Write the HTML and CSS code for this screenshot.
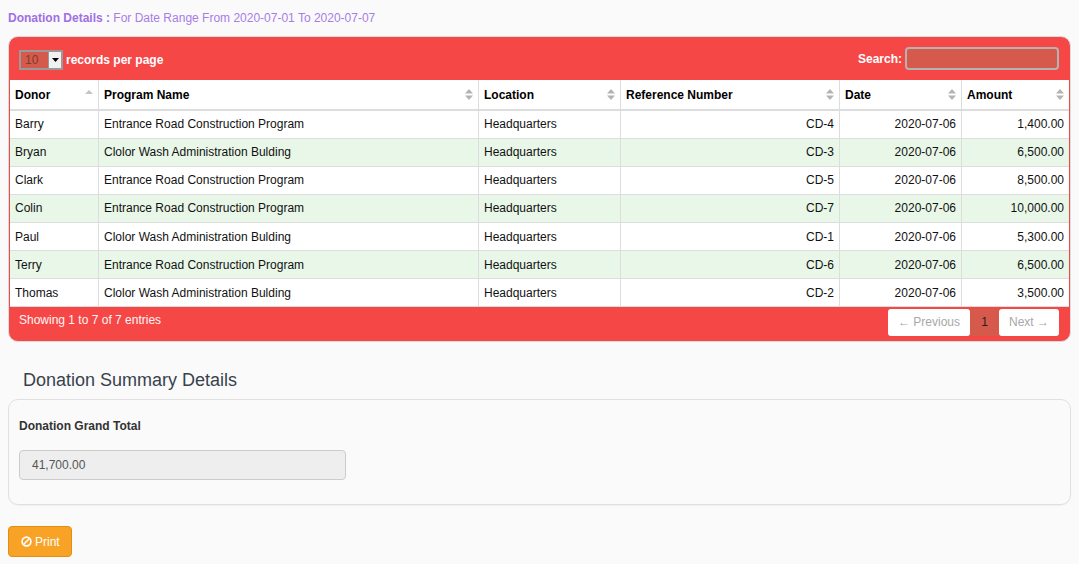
FILE: index.html
```html
<!DOCTYPE html>
<html lang="en">
<head>
<meta charset="utf-8">
<title>Donation Details</title>
<link rel="stylesheet" href="styles.css">
</head>
<body>
<p class="range"><b>Donation Details :</b> For Date Range From 2020-07-01 To 2020-07-07</p>
<section class="wrapper">
  <div class="toolbar">
    <label class="length"><span class="fake-select"><span class="val">10</span><span class="arrow"><svg width="7" height="4" viewBox="0 0 7 4"><path d="M0 0h7L3.500 4z" fill="#000"/></svg></span></span> records per page</label>
    <label class="search"><span class="search-text">Search:</span> <span class="search-input"></span></label>
  </div>
  <table>
    <colgroup><col class="c1"><col class="c2"><col class="c3"><col class="c4"><col class="c5"><col class="c6"></colgroup>
    <thead>
      <tr>
        <th>Donor<svg class="sort" width="8" height="11" viewBox="0 0 8 11"><path d="M4 1 8 5H0z" fill="#c4c4c4"/></svg></th>
        <th>Program Name<svg class="sort" width="8" height="11" viewBox="0 0 8 11"><path d="M4 0 8 4.500H0zM4 11 0 6.500h8z" fill="#b4b4b4"/></svg></th>
        <th>Location<svg class="sort" width="8" height="11" viewBox="0 0 8 11"><path d="M4 0 8 4.500H0zM4 11 0 6.500h8z" fill="#b4b4b4"/></svg></th>
        <th>Reference Number<svg class="sort" width="8" height="11" viewBox="0 0 8 11"><path d="M4 0 8 4.500H0zM4 11 0 6.500h8z" fill="#b4b4b4"/></svg></th>
        <th>Date<svg class="sort" width="8" height="11" viewBox="0 0 8 11"><path d="M4 0 8 4.500H0zM4 11 0 6.500h8z" fill="#b4b4b4"/></svg></th>
        <th>Amount<svg class="sort" width="8" height="11" viewBox="0 0 8 11"><path d="M4 0 8 4.500H0zM4 11 0 6.500h8z" fill="#b4b4b4"/></svg></th>
      </tr>
    </thead>
    <tbody>
      <tr><td>Barry</td><td>Entrance Road Construction Program</td><td>Headquarters</td><td class="r">CD-4</td><td class="r">2020-07-06</td><td class="r">1,400.00</td></tr>
      <tr class="alt"><td>Bryan</td><td>Clolor Wash Administration Bulding</td><td>Headquarters</td><td class="r">CD-3</td><td class="r">2020-07-06</td><td class="r">6,500.00</td></tr>
      <tr><td>Clark</td><td>Entrance Road Construction Program</td><td>Headquarters</td><td class="r">CD-5</td><td class="r">2020-07-06</td><td class="r">8,500.00</td></tr>
      <tr class="alt"><td>Colin</td><td>Entrance Road Construction Program</td><td>Headquarters</td><td class="r">CD-7</td><td class="r">2020-07-06</td><td class="r">10,000.00</td></tr>
      <tr><td>Paul</td><td>Clolor Wash Administration Bulding</td><td>Headquarters</td><td class="r">CD-1</td><td class="r">2020-07-06</td><td class="r">5,300.00</td></tr>
      <tr class="alt"><td>Terry</td><td>Entrance Road Construction Program</td><td>Headquarters</td><td class="r">CD-6</td><td class="r">2020-07-06</td><td class="r">6,500.00</td></tr>
      <tr><td>Thomas</td><td>Clolor Wash Administration Bulding</td><td>Headquarters</td><td class="r">CD-2</td><td class="r">2020-07-06</td><td class="r">3,500.00</td></tr>
    </tbody>
  </table>
  <div class="footer">
    <span class="info">Showing 1 to 7 of 7 entries</span>
    <nav class="pager"><span class="pg">← Previous</span><span class="cur">1</span><span class="pg">Next →</span></nav>
  </div>
</section>
<h4 class="summary-title">Donation Summary Details</h4>
<section class="well">
  <label class="total-label">Donation Grand Total</label>
  <div class="total-input">41,700.00</div>
</section>
<button class="print" type="button"><svg width="11" height="11" viewBox="0 0 12 12"><circle cx="6" cy="6" r="4.800" fill="none" stroke="#fff" stroke-width="1.800"/><path d="M2.800 9.200 9.200 2.800" stroke="#fff" stroke-width="1.700"/></svg> Print</button>
</body>
</html>
```
FILE: styles.css
```css
* { box-sizing: border-box; }
html, body { margin: 0; padding: 0; }
body {
  background: #fafafa;
  font-family: "Liberation Sans", Arial, sans-serif;
  font-size: 12px;
  color: #333;
  padding: 0 8px;
  height: 564px;
  overflow: hidden;
}
.range { margin: 0; padding-top: 11px; height: 36px; line-height: 14px; color: #a77de8; font-size: 12px; }
.range b { color: #a06fe6; }
.wrapper {
  width: 1063px;
  height: 306px;
  background: #f64747;
  border: 1px solid #ddd;
  border-radius: 10px;
  overflow: hidden;
}
.toolbar {
  height: 43px;
  display: flex;
  justify-content: space-between;
  align-items: center;
  padding: 0 11px 0 10px;
  color: #fff;
  font-weight: bold;
}
.length { display: flex; align-items: center; gap: 3px; padding-top: 2px; }
.fake-select {
  width: 44px; height: 20px;
  border: 2px solid #9a9a9a;
  background: #d55a4b;
  display: flex;
  justify-content: space-between;
  color: #7d3a30;
  font-weight: normal;
}
.val { padding-left: 4px; line-height: 16px; }
.arrow { width: 13px; background: #f1f1f1; border-left: 1px solid #999; display: flex; align-items: center; justify-content: center; }
.search { display: flex; align-items: center; gap: 3px; margin-bottom: 1px; }
.search-text { padding-top: 2px; }
.search-input {
  width: 154px; height: 23px;
  background: #d55a4b;
  border: 2px solid #b3b3b3;
  border-radius: 4px;
}
table {
  width: 1059px;
  margin-left: 1px;
  border-collapse: collapse;
  table-layout: fixed;
  background: #fff;
  color: #111;
  font-size: 12px;
}
.c1 { width: 88px; } .c2 { width: 380px; } .c3 { width: 142px; }
.c4 { width: 219px; } .c5 { width: 122px; } .c6 { width: 108px; }
th, td { border: 1px solid #ddd; padding: 0 5px; overflow: hidden; white-space: nowrap; }
th + th, td + td { padding-left: 5.500px; }
tr > :first-child { border-left: 0; }
tr > :last-child { border-right: 0; }
thead tr:first-child th { border-top: 0; }
th { height: 29.900px; padding-top: 1px; text-align: left; color: #000; border-bottom-width: 2px; position: relative; }
td { height: 28.170px; }
.r { text-align: right; padding-right: 4.500px; }
td.r:last-child { padding-right: 5px; }
.alt td { background: #e8f7e8; }
.sort { position: absolute; right: 5px; top: 9px; }
.footer { display: flex; justify-content: space-between; align-items: flex-start; padding: 2px 11px 0 10px; color: #fff; }
.info { line-height: 14px; margin-top: 4px; opacity: .95; }
.pager { display: flex; color: #a8a8a8; }
.pg { background: #fff; height: 27px; line-height: 27px; border-radius: 3px; padding: 0 10px; }
.cur { background: #d55a4b; color: #222; width: 29px; text-align: center; line-height: 27px; height: 27px; }
.summary-title { margin: 0; padding: 28px 0 0 15px; height: 57px; font-size: 18px; font-weight: normal; line-height: 20px; color: #37424e; }
.well {
  width: 1063px; height: 106px;
  border: 1px solid #e0e0e0;
  border-radius: 10px;
  padding: 19px 10px 0;
  box-shadow: 0 1px 1px rgba(0,0,0,.04);
}
.total-label { display: block; font-weight: bold; line-height: 14px; }
.total-input {
  margin-top: 17px;
  width: 327px; height: 30px;
  background: #eee;
  border: 1px solid #ccc;
  border-radius: 4px;
  padding-left: 12px;
  line-height: 28px;
  color: #555;
}
.print {
  display: flex; align-items: center; gap: 3px;
  margin-top: 21px;
  width: 64px; height: 31px;
  background: #f9a326;
  border: 1px solid #e08e14;
  border-radius: 4px;
  color: #fff;
  font: 12px "Liberation Sans", Arial, sans-serif;
  padding: 0 0 0 12px;
}
```
